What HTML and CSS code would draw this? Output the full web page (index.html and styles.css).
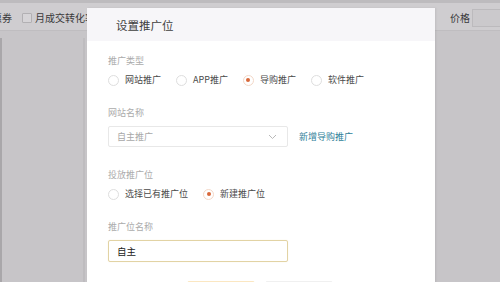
FILE: index.html
```html
<!DOCTYPE html>
<html lang="zh-CN">
<head>
<meta charset="utf-8">
<title>设置推广位</title>
<link rel="stylesheet" href="styles.css">
</head>
<body>
<div class="page">
  <div class="topstrip"></div>
  <div class="toolbar">
    <div class="tb-left">
      <span class="tb-text">惠券</span>
      <span class="tb-check"></span>
      <span class="tb-text">月成交转化率高</span>
    </div>
    <div class="tb-right">
      <span class="tb-text">价格</span>
      <span class="tb-input"></span>
    </div>
  </div>
  <div class="content">
    <div class="side-panel"></div>
  </div>
</div>

<div class="dialog">
  <div class="dialog-head">设置推广位</div>
  <div class="dialog-body">
    <div class="label">推广类型</div>
    <div class="radios">
      <label class="radio"><span class="dot"></span>网站推广</label>
      <label class="radio"><span class="dot"></span>APP推广</label>
      <label class="radio on"><span class="dot"></span>导购推广</label>
      <label class="radio"><span class="dot"></span>软件推广</label>
    </div>

    <div class="label gap">网站名称</div>
    <div class="field-row">
      <div class="select">
        <span class="placeholder">自主推广</span>
        <svg class="chev" width="9" height="6" viewBox="0 0 9 6"><path d="M1 1 L4.5 4.5 L8 1" fill="none" stroke="#b9b9b9" stroke-width="1"/></svg>
      </div>
      <a class="link">新增导购推广</a>
    </div>

    <div class="label gap2">投放推广位</div>
    <div class="radios">
      <label class="radio"><span class="dot"></span>选择已有推广位</label>
      <label class="radio on"><span class="dot"></span>新建推广位</label>
    </div>

    <div class="label gap">推广位名称</div>
    <div class="input">自主</div>

    <div class="buttons">
      <span class="btn primary"></span>
      <span class="btn"></span>
    </div>
  </div>
</div>
</body>
</html>
```
FILE: styles.css
```css
* { box-sizing: border-box; }
html, body { margin: 0; padding: 0; }
body {
  width: 500px;
  height: 282px;
  overflow: hidden;
  background: #c7c5c8;
  font-family: "Noto Sans CJK SC", "Noto Sans", sans-serif;
  position: relative;
}
.page { width: 500px; height: 282px; display: flex; flex-direction: column; }
.topstrip { height: 3px; background: #bdbbbe; }
.toolbar {
  height: 28px;
  padding-top: 3px;
  background: #cfcdd0;
  border-bottom: 1px solid #bfbdc0;
  display: flex;
  justify-content: space-between;
  align-items: center;
}
.tb-left { display: flex; align-items: center; margin-left: -8px; }
.tb-right { display: flex; align-items: center; }
.tb-text { font-size: 10px; color: #3a393b; line-height: 14px; }
.tb-check {
  width: 10px; height: 10px;
  border: 1px solid #b2b0b3;
  background: #d6d4d7;
  border-radius: 1px;
  margin: 0 3px 0 10px;
}
.tb-right .tb-text { margin-right: 2px; }
.tb-input {
  width: 28px; height: 18px;
  margin-top: -1px;
  border: 1px solid #bcbabd;
  border-right: none;
  background: #cbc9cc;
}
.content { flex: 1; padding-top: 7px; }
.side-panel {
  width: 85px;
  height: 100%;
  border-left: 2px solid #a9a7aa;
  border-right: 2px solid #bebcbf;
}

.dialog {
  position: absolute;
  left: 87px;
  top: 8px;
  width: 348px;
  height: 290px;
  background: #ffffff;
  box-shadow: 1px 0 2px rgba(0,0,0,0.08);
}
.dialog-head {
  height: 33px;
  background: #f7f6f9;
  padding-left: 29px;
  font-size: 11.5px;
  line-height: 34px;
  color: #3f3f3f;
}
.dialog-body { padding: 13px 21px 0 21px; }
.label {
  font-size: 9px;
  line-height: 14px;
  color: #ababab;
}
.label.gap { margin-top: 18px; }
.label.gap2 { margin-top: 21px; }
.radios {
  display: flex;
  align-items: center;
  margin-top: 4px;
  height: 16px;
}
.radio {
  display: flex;
  align-items: center;
  font-size: 9px;
  line-height: 16px;
  color: #4a4a4a;
  margin-right: 15px;
}
.dot {
  width: 11px; height: 11px;
  border-radius: 50%;
  border: 1px solid #dedede;
  background: #fff;
  margin-right: 6px;
  position: relative;
}
.radio.on .dot { border-color: #f3d8c8; }
.radio.on .dot::after {
  content: "";
  position: absolute;
  left: 2.5px; top: 2.5px;
  width: 4px; height: 4px;
  border-radius: 50%;
  background: #d9683a;
}
.field-row {
  display: flex;
  align-items: center;
  margin-top: 6px;
}
.select {
  width: 180px;
  height: 21px;
  border: 1px solid #e8e8e8;
  border-radius: 2px;
  display: flex;
  align-items: center;
  justify-content: space-between;
  padding: 0 10px 0 8px;
}
.placeholder { font-size: 9px; color: #a8a8a8; }
.link {
  margin-left: 11px;
  font-size: 9px;
  color: #2f7f99;
}
.input {
  margin-top: 6px;
  width: 180px;
  height: 22px;
  border: 1px solid #e2d3a4;
  border-radius: 2px;
  box-shadow: 0 0 1px #f0e6c4;
  padding-left: 8px;
  font-size: 9.5px;
  line-height: 20px;
  color: #222;
}
.buttons {
  display: flex;
  justify-content: center;
  gap: 10px;
  margin-top: 19px;
  padding-right: 2px;
}
.btn {
  width: 68px;
  height: 24px;
  border: 1px solid #f0f0f0;
  border-radius: 2px;
}
.btn.primary {
  border-color: #fbe7c2;
  background: #fdf3de;
}
```
